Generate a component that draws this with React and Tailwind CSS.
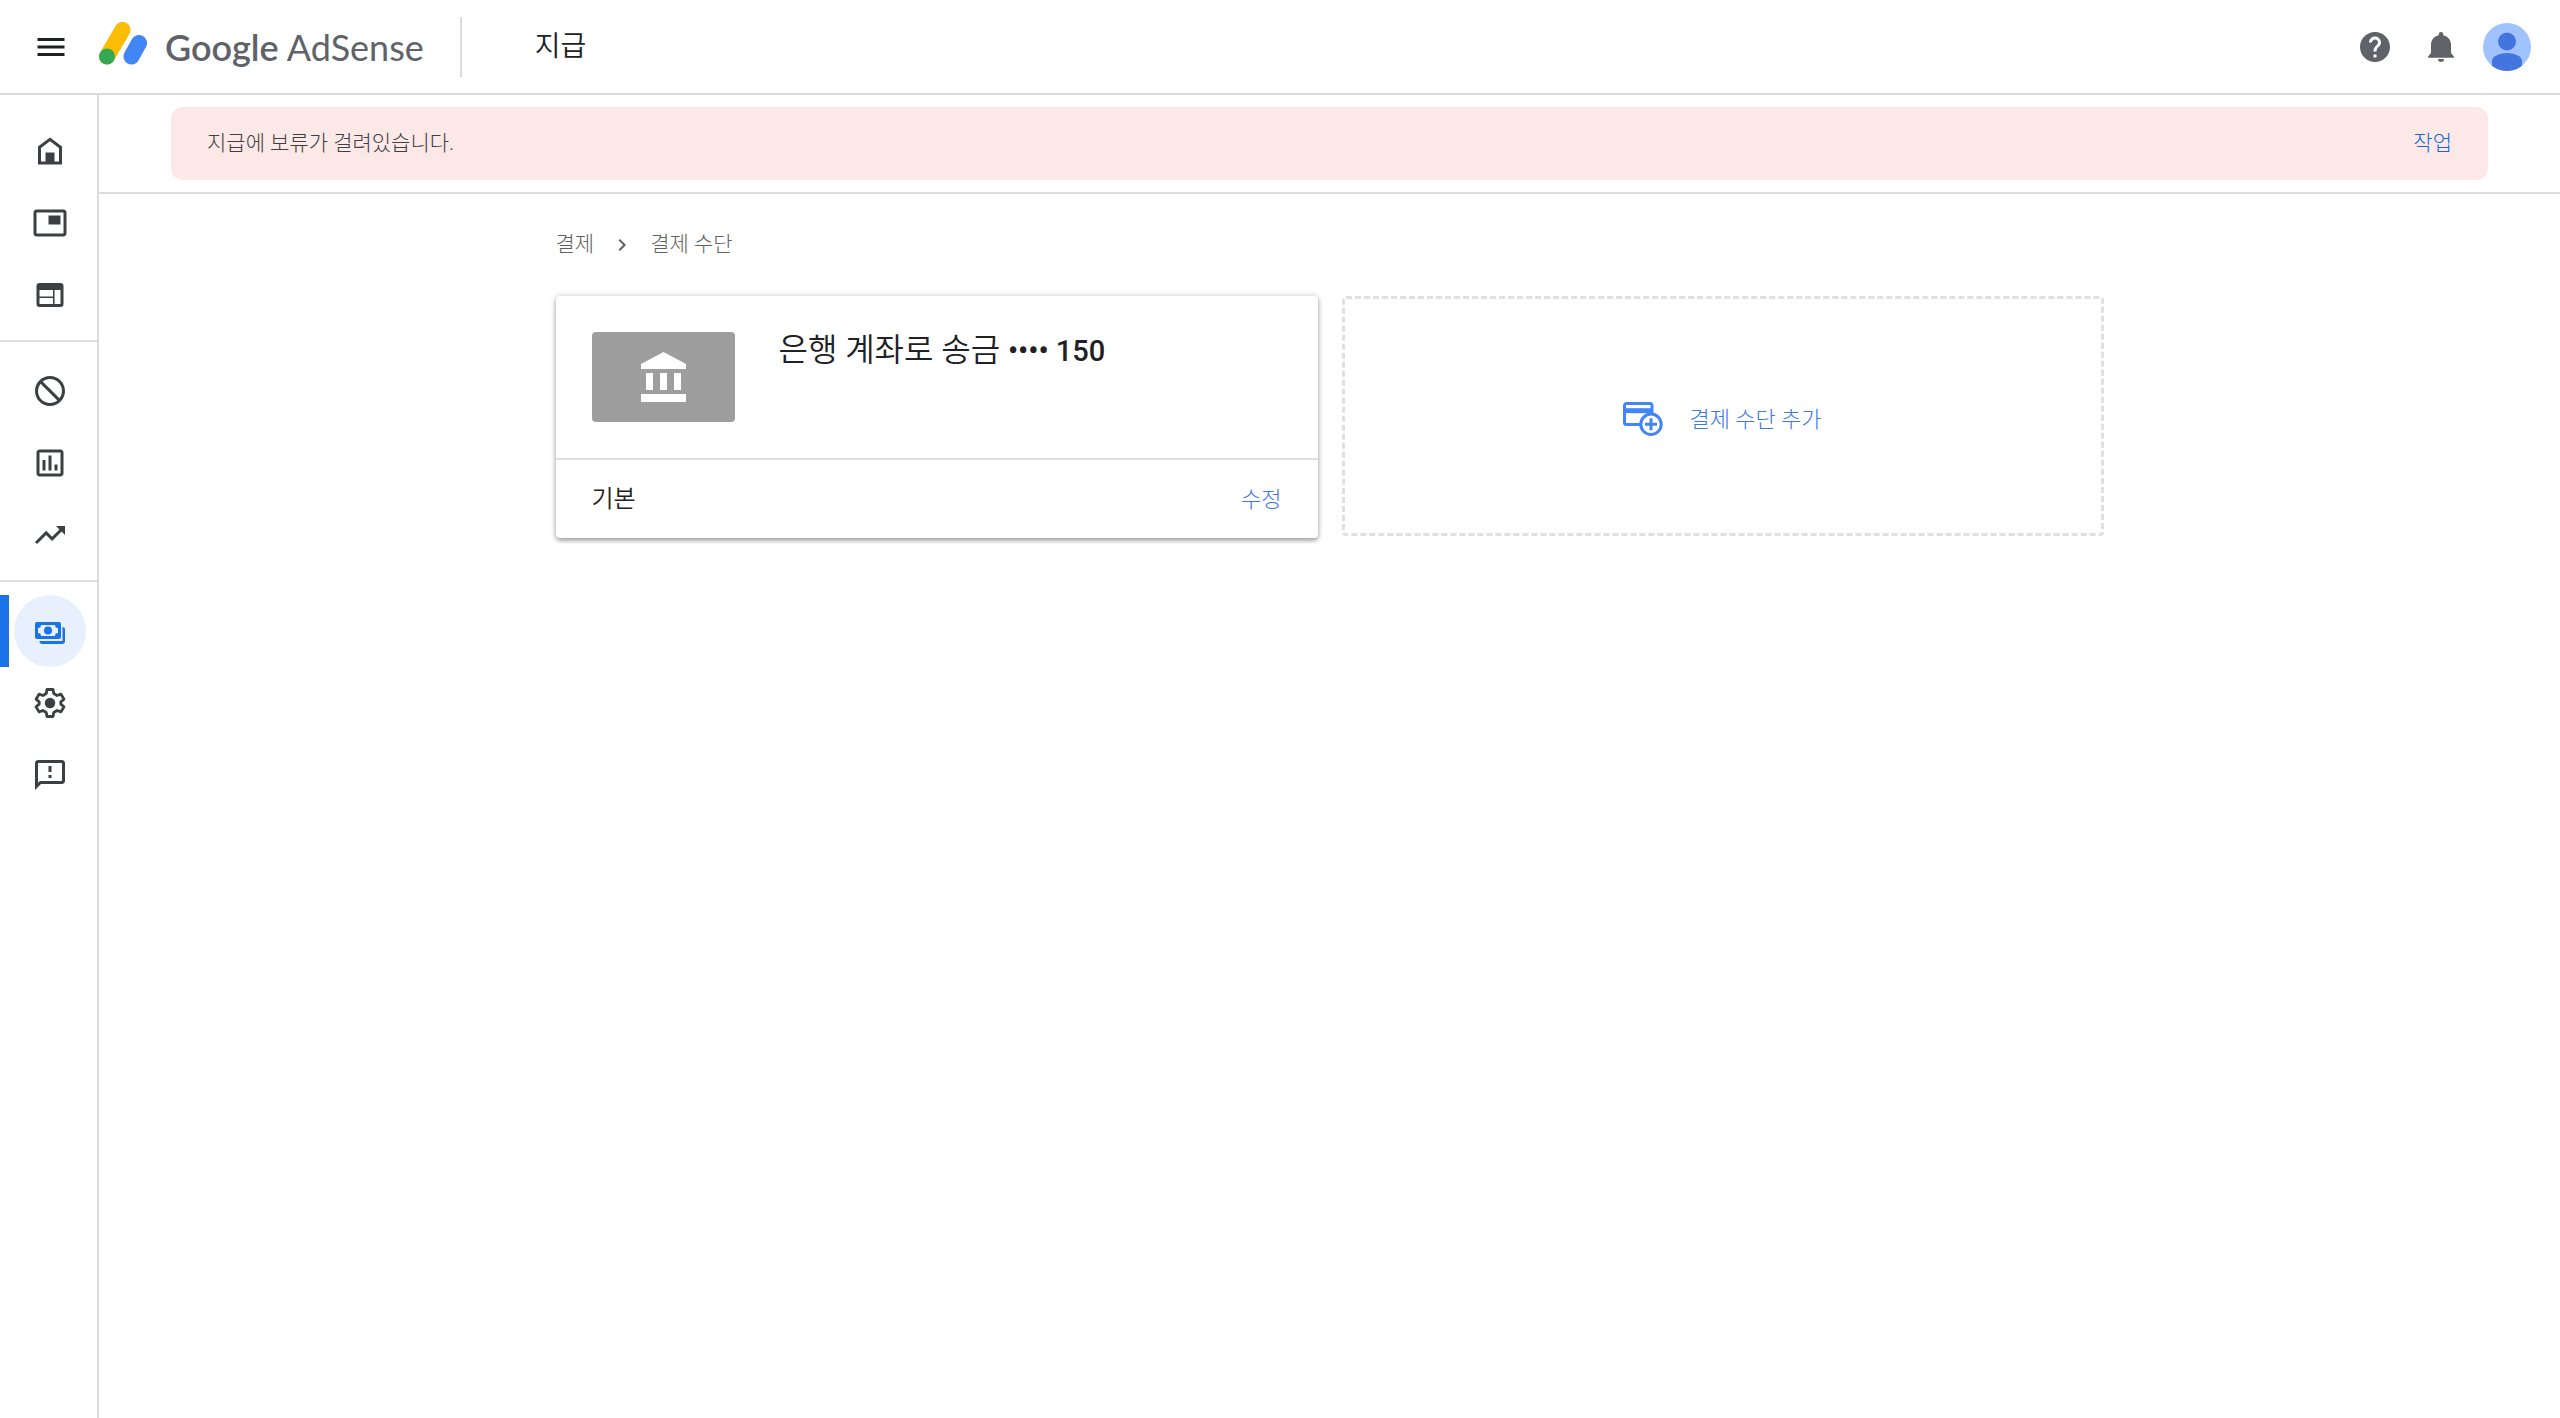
import {
  MdMenu,
  MdPictureInPicture,
  MdBlock,
  MdOutlinePoll,
  MdTrendingUp,
  MdOutlineFeedback,
  MdHelp,
  MdChevronRight,
} from 'react-icons/md'

const NAV = [
  [
    { label: '홈', icon: <HomeIcon /> },
    { label: '광고', icon: <MdPictureInPicture className="size-9" /> },
    { label: '사이트', icon: <SitesIcon /> },
  ],
  [
    { label: '차단 관리', icon: <MdBlock className="size-9 -scale-x-100" /> },
    { label: '보고서', icon: <MdOutlinePoll className="size-9" /> },
    { label: '최적화', icon: <MdTrendingUp className="size-9" /> },
  ],
  [
    { label: '지급', icon: <PaymentsIcon />, active: true },
    { label: '계정', icon: <GearIcon /> },
    { label: '의견', icon: <MdOutlineFeedback className="size-9" /> },
  ],
]

export default function App() {
  return (
    <div className="flex min-h-screen flex-col bg-white font-['Roboto','Noto_Sans_CJK_KR',sans-serif] text-[#202124]">
      <Header />
      <div className="flex flex-1">
        <Sidebar />
        <main className="min-w-0 flex-1">
          <Banner />
          <Payments />
        </main>
      </div>
    </div>
  )
}

function Header() {
  return (
    <header className="flex h-[95px] items-center border-b-2 border-[#dadce0] pr-[29px] pl-[33px]">
      <button aria-label="메뉴" className="mr-[30px]">
        <MdMenu className="size-9" />
      </button>
      <Logo />
      <div className="mr-[73px] ml-9 h-15 w-0.5 bg-[#dadce0]" />
      <h1 className="flex-1 text-[28px] font-[350]">지급</h1>
      <div className="flex items-center text-[#5f6368]">
        <button aria-label="도움말" className="mr-[30px]">
          <MdHelp className="size-9" />
        </button>
        <button aria-label="알림" className="mr-6">
          <BellIcon />
        </button>
        <button aria-label="계정">
          <Avatar />
        </button>
      </div>
    </header>
  )
}

function Logo() {
  return (
    <a href="#" className="flex items-center gap-[18px] text-[#5f6368]">
      <svg viewBox="0 0 48 50" className="h-[50px] w-12" fill="none" strokeLinecap="round">
        <path d="M23.500 8L8 34.500" stroke="#fbbc04" strokeWidth="16" />
        <circle cx="8" cy="34.500" r="8" fill="#34a853" />
        <path d="M40 21L32.500 34.500" stroke="#4285f4" strokeWidth="16" />
      </svg>
      <span className="font-['Lato',sans-serif] text-[36px]">
        <span className="font-semibold">Google</span> AdSense
      </span>
    </a>
  )
}

function Sidebar() {
  return (
    <nav className="w-[99px] shrink-0 border-r-2 border-[#dadce0] text-[#3c4043]">
      {NAV.map((group, i) => (
        <ul key={i} className="border-[#dadce0] pt-[13px] pb-[9px] not-last:border-b-2 first:pt-5">
          {group.map((item) => (
            <li key={item.label}>
              <a
                href="#"
                aria-label={item.label}
                className={
                  item.active
                    ? 'flex h-18 items-center border-l-9 border-[#1a73e8] pl-[5px] text-[#1a73e8]'
                    : 'flex h-18 items-center pl-[14px]'
                }
              >
                <span
                  className={
                    item.active
                      ? 'flex size-18 items-center justify-center rounded-full bg-[#e8f0fe]'
                      : 'flex size-18 items-center justify-center'
                  }
                >
                  {item.icon}
                </span>
              </a>
            </li>
          ))}
        </ul>
      ))}
    </nav>
  )
}

function Banner() {
  return (
    <div className="border-b-2 border-[#dadce0] px-[72px] py-3">
      <div className="flex h-[73px] items-center justify-between rounded-xl bg-[#fce8e6] px-9">
        <p className="text-[21px] font-light text-[#3c4043]">지급에 보류가 걸려있습니다.</p>
        <button className="text-[21px] font-light text-[#1967d2]">작업</button>
      </div>
    </div>
  )
}

function Payments() {
  return (
    <section className="mx-auto max-w-[1548px] py-9">
      <div className="flex h-[30px] items-center text-[21px] font-light text-[#616161]">
        <a href="#">결제</a>
        <MdChevronRight className="mx-4 size-6" />
        <span>결제 수단</span>
      </div>
      <div className="mt-9 grid grid-cols-2 items-start gap-6">
        <BankCard />
        <button className="flex h-60 items-center justify-center gap-[26px] rounded-sm border-3 border-dashed border-[#e0e0e0] pt-1.5 text-[#3b78e7]">
          <AddCardIcon />
          <span className="text-[22px] font-light">결제 수단 추가</span>
        </button>
      </div>
    </section>
  )
}

function BankCard() {
  return (
    <article className="rounded-sm bg-white shadow-[0_3px_4px_rgba(0,0,0,0.28),0_0_6px_rgba(0,0,0,0.2)]">
      <div className="flex h-[164px] gap-11 border-b-2 border-[#e0e0e0] p-9">
        <div className="flex h-[90px] w-[143px] items-center justify-center rounded-sm bg-[#9e9e9e] text-white">
          <BankIcon />
        </div>
        <h2 className="text-[32px] leading-9 font-[350]">
          은행 계좌로 송금 <span className="text-[29px] font-medium">•••• 150</span>
        </h2>
      </div>
      <div className="flex h-[78px] items-center justify-between px-9">
        <span className="text-[24px] font-[350]">기본</span>
        <button className="text-[22px] font-light text-[#3b78e7]">수정</button>
      </div>
    </article>
  )
}

function HomeIcon() {
  return (
    <svg viewBox="0 0 24 24" className="size-9" fill="none" stroke="currentColor" strokeWidth="2">
      <path d="M5 20V9.500l7-5.300 7 5.300V20z" />
      <path d="M9 13h6v7H9z" fill="currentColor" stroke="none" />
    </svg>
  )
}

function SitesIcon() {
  return (
    <svg viewBox="0 0 24 24" className="size-9" fill="currentColor" fillRule="evenodd">
      <path d="M5 4h14a2 2 0 0 1 2 2v12a2 2 0 0 1-2 2H5a2 2 0 0 1-2-2V6a2 2 0 0 1 2-2zM5 8.700v4.300h9V8.700zM5 14v4h9v-4zM15 8.700V18h4V8.700z" />
    </svg>
  )
}

function PaymentsIcon() {
  return (
    <svg viewBox="0 0 36 36" className="size-9" fill="currentColor" fillRule="evenodd">
      <path d="M5 9h22a2 2 0 0 1 2 2v13a2 2 0 0 1-2 2H5a2 2 0 0 1-2-2V11a2 2 0 0 1 2-2zM9 12a3 3 0 0 1-3 3v5a3 3 0 0 1 3 3h14a3 3 0 0 1 3-3v-5a3 3 0 0 1-3-3z" />
      <circle cx="16" cy="17.500" r="4" />
      <path d="M30.500 14a2.500 2.500 0 0 1 2.500 2.500V28a3 3 0 0 1-3 3H10a2.500 2.500 0 0 1-2.500-3h23z" />
    </svg>
  )
}

function GearIcon() {
  return (
    <svg viewBox="0 0 24 24" className="size-9" fill="none" stroke="currentColor" strokeLinejoin="round">
      <path
        strokeWidth="1.900"
        d="M10 3h4l.5 2.700 2.200 1.300 2.600-.9 2 3.400-2.100 1.800v1.400l2.100 1.800-2 3.400-2.600-.9-2.200 1.300L14 21h-4l-.5-2.700L7.300 17l-2.600.9-2-3.400 2.100-1.800v-1.400L2.700 9.500l2-3.400 2.600.9 2.200-1.300z"
      />
      <circle cx="12" cy="12" r="3.500" fill="currentColor" stroke="none" />
    </svg>
  )
}

function BellIcon() {
  return (
    <svg viewBox="0 0 24 24" className="size-9" fill="currentColor">
      <path d="M12 2a1.500 1.500 0 0 1 1.500 1.500v.7c3.200.7 5.200 3.200 5.200 6.500V16l1.900 2.300v.8H3.400v-.8L5.300 16v-5.300c0-3.300 2-5.800 5.200-6.500v-.7A1.500 1.500 0 0 1 12 2z" />
      <path d="M10 20h4a2 2 0 0 1-4 0z" />
    </svg>
  )
}

function Avatar() {
  return (
    <svg viewBox="0 0 48 48" className="size-12">
      <clipPath id="avatar">
        <circle cx="24" cy="24" r="24" />
      </clipPath>
      <g clipPath="url(#avatar)">
        <rect width="48" height="48" fill="#a0c3ff" />
        <circle cx="24" cy="18.500" r="9" fill="#4374e0" />
        <path d="M9 48V38c0-5 8-8 15-8s15 3 15 8v10z" fill="#4374e0" />
      </g>
    </svg>
  )
}

function BankIcon() {
  return (
    <svg viewBox="0 0 45 50" className="h-[50px] w-[45px]" fill="currentColor">
      <path d="M22.500 0L45 12v5H0v-5zM5 21h7v17H5zM19 21h7v17h-7zM33 21h7v17h-7zM0 42h45v8H0z" />
    </svg>
  )
}

function AddCardIcon() {
  return (
    <svg viewBox="0 0 40 34" className="h-[34px] w-10" fill="none" stroke="#4285f4" strokeWidth="3">
      <path d="M18 22.500H3.500a2 2 0 0 1-2-2v-17a2 2 0 0 1 2-2h23.500a2 2 0 0 1 2 2V12" />
      <path d="M1 8.700h28" strokeWidth="5" />
      <circle cx="28" cy="22.300" r="10.200" fill="white" />
      <path d="M28 16.300v12M22 22.300h12" />
    </svg>
  )
}
